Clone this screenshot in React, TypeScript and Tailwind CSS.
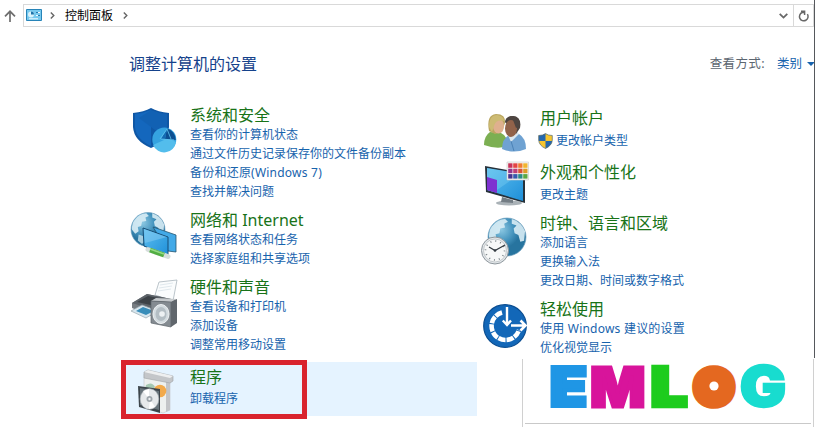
import React from 'react';

interface CategoryProps {
  title: string;
  links: string[];
  icon: React.ReactNode;
  className?: string;
  linksClassName?: string;
  shield?: boolean;
}

const SecurityIcon = () => (
  <svg className="w-[50px] h-[50px]" viewBox="0 0 50 50">
    <path d="M3 8Q14 7 21 3Q28 7 39 8V22Q38 36 21 43Q4 36 3 22Z" fill="#0f57a5" />
    <path d="M5 9Q14 8 21 5V41Q6 34 5 22Z" fill="#1467bd" />
    <path d="M21 5Q28 8 37 9V22Q36 28 33 31L9 13Z" fill="#1261b3" />
    <circle cx="34.3" cy="34.5" r="12" fill="#35a3e0" />
    <path d="M23 40A12 12 0 0 0 46 37Q40 33 34 35Z" fill="#53bdec" />
    <path d="M35 34L37 23.5A12 12 0 0 1 45.8 35Z" fill="#0c4f92" />
    <path d="M31 34L37 24L35 34Z" fill="#146bb3" />
    <path d="M30 34L37 24M37 24L41 34M31 34L44 35" stroke="#62c6ef" strokeWidth=".8" fill="none" />
  </svg>
);

const Globe = ({ cx, cy, r }: { cx: number; cy: number; r: number }) => (
  <g transform={`translate(${cx} ${cy}) scale(${r / 20})`}>
    <circle r="20" fill="url(#globeFill)" stroke="#6c9fbd" strokeWidth="0.7" />
    <path d="M-16-11Q-10-19-2-19L1-16L-3-14L-2-10L-7-9L-8-4L-12-3L-11 2L-15 5L-19 0Q-19-7-16-11Z" fill="#d9edf5" opacity=".9" />
    <path d="M5-19Q15-16 19-6L18 4L14 5L12-2L8-4L7-9L10-12L5-14Z" fill="#d9edf5" opacity=".9" />
    <path d="M-11 6L-5 8L-3 13L-7 17L-12 13Z" fill="#c4e2ee" opacity=".8" />
  </g>
);

const NetworkIcon = () => (
  <svg className="w-[50px] h-[50px]" viewBox="0 0 50 50">
    <Globe cx={18} cy={19.5} r={17} />
    <path d="M23 17L46 25V42L38 41Z" fill="#42a9e7" stroke="#24546f" strokeWidth=".8" />
    <path d="M13 18L38 27V46L14 36Z" fill="url(#screenFill)" stroke="#174d75" strokeWidth="1" />
    <path d="M14 19L37 27L15 33Z" fill="#8acef4" opacity=".5" />
    <path d="M18 39.5L38 46.5" stroke="#d6dedc" strokeWidth="5" strokeLinecap="round" />
    <path d="M20 40L34 45" stroke="#52ae42" strokeWidth="5" />
    <path d="M20 39L34 44" stroke="#94d986" strokeWidth="1.5" />
  </svg>
);

const HardwareIcon = () => (
  <svg className="w-[50px] h-[52px]" viewBox="0 0 50 52">
    <path d="M25 18L29 5L47 3L43 24Z" fill="#fafcfd" stroke="#a9b5bc" strokeWidth=".8" />
    <path d="M30 8L43 6M29 11L42 9M28 14L41 12" stroke="#e0e8ed" />
    <path d="M2 26L17 17L46 23V29L23 40L2 31Z" fill="#777d82" />
    <path d="M2 26L17 17L46 23L24 33Z" fill="#5d6369" />
    <path d="M7 25L18 19L39 23L25 29Z" fill="#3c4247" />
    <path d="M1 34L12 28L28 34L16 41Z" fill="#d8e7ef" stroke="#9aa7af" strokeWidth=".7" />
    <path d="M6 34L13 30L24 34L16 38Z" fill="#398db9" />
    <path d="M21 24L26 21L47 22L41 25Z" fill="#c5c9cc" />
    <path d="M21 24L41 25V50L21 46Z" fill="#848b91" stroke="#5d646a" strokeWidth=".7" />
    <path d="M41 25L47 22V46L41 50Z" fill="#60666c" />
    <ellipse cx="31" cy="37" rx="8" ry="9.5" fill="#d4dce0" stroke="#eef1f3" />
    <ellipse cx="31" cy="37" rx="5.5" ry="7" fill="#b4bec4" />
    <circle cx="32" cy="37" r="2.8" fill="#edf1f3" />
  </svg>
);

const ProgramsIcon = () => (
  <svg className="w-[50px] h-[50px]" viewBox="0 0 50 50">
    <path d="M14 7L40 13V43L33 46L14 40Z" fill="#edf0ef" stroke="#c5c8ca" strokeWidth=".6" />
    <path d="M36 14L40 13V43L36 45Z" fill="#c3c5c8" />
    <path d="M14 5L18 3L43 9V14L40 16L14 11Z" fill="#c4c6c9" stroke="#9fa2a6" strokeWidth=".6" />
    <path d="M14 5L18 3L43 9L40 11Z" fill="#eeeff0" />
    <path d="M16 18Q22 14 25 20L21 25L15 22Z" fill="#a5c8b2" />
    <circle cx="30" cy="24" r="6.3" fill="#f2aa4c" />
    <path d="M8 19L30 22V46L9 40Z" fill="#3d454b" />
    <path d="M10 21L29 24V43L10 38Z" fill="#68747b" />
    <ellipse cx="19.5" cy="32" rx="9.3" ry="10.3" fill="#e6e9eb" stroke="#a9b0b5" strokeWidth=".6" />
    <path d="M19 32L13 24L19 22ZM20 32L25 40L19 42Z" fill="#fff" />
    <circle cx="19.5" cy="32" r="3" fill="#9ea6ac" />
    <circle cx="19.5" cy="32" r="1.2" fill="#eff1f2" />
  </svg>
);

const UsersIcon = () => (
  <svg className="w-[50px] h-[46px]" viewBox="0 0 50 46">
    <path d="M4 37Q4 28 10 24L21 25Q28 28 27 38Q18 42 4 37Z" fill="#7caf52" />
    <path d="M9 23Q6 7 16 6Q26 6 25 15L22 24L15 26Z" fill="#baa65f" />
    <ellipse cx="18.5" cy="18" rx="5.5" ry="7.5" fill="#dfb08e" />
    <path d="M9 19Q9 7 17 7Q24 8 24 13Q16 11 14 18L12 24Z" fill="#cdbb74" />
    <path d="M22 41Q22 31 29 27L39 26Q46 30 46 41Q34 46 22 41Z" fill="#6fa2d2" />
    <path d="M28 27L31 34L39 26L37 23H29Z" fill="#dbe7ef" />
    <path d="M25 14Q26 8 33 8Q42 9 40 20L36 26Z" fill="#4e4541" />
    <ellipse cx="31" cy="20.5" rx="6" ry="8.5" fill="#91624a" />
    <path d="M25 15Q27 11 33 12L36 20L40 18Q40 8 33 8Q26 8 25 15Z" fill="#4e4541" />
    <path d="M31 33L34 43" stroke="#4b82b6" />
  </svg>
);

const AppearanceIcon = () => {
  const colors = [
    '#c83258', '#e34444', '#ef7b30', '#f1b52f',
    '#94368e', '#bd3f78', '#d95538', '#dd9b2a',
    '#46348f', '#365bae', '#2c8b87', '#5ca843'
  ];

  return (
    <svg className="w-[50px] h-[50px]" viewBox="0 0 50 50">
      <ellipse cx="29" cy="45" rx="13" ry="2.5" fill="#aab2b7" />
      <path d="M22 39L33 42V45L21 44Z" fill="#737d84" />
      <path d="M5 8L45 15V45L6 34Z" fill="#26313a" />
      <path d="M7 10L43 16V43L7 32Z" fill="url(#screenFill)" />
      <path d="M7 10L40 16L14 34L7 32Z" fill="#84d3f4" opacity=".35" />
      <path d="M7 19L17 22V35L7 32Z" fill="#7e31d0" />
      <path d="M27 4H48.5V22H27Z" fill="#f8f7f3" stroke="#c7c8c9" strokeWidth=".6" />
      {colors.map((color, i) => (
        <rect key={color} x={28.2 + (i % 4) * 5} y={5.3 + Math.floor(i / 4) * 5.4} width="4.3" height="4.5" fill={color} />
      ))}
    </svg>
  );
};

const ClockIcon = () => (
  <svg className="w-[50px] h-[53px]" viewBox="0 0 50 53">
    <Globe cx={27} cy={24} r={19} />
    <circle cx="15" cy="37.5" r="13.5" fill="#e4e8eb" stroke="#8d969c" />
    <circle cx="15" cy="37.5" r="11.5" fill="#f7f8f8" stroke="#b8bec2" strokeWidth=".8" />
    <circle cx="15" cy="37.5" r="9.5" fill="none" stroke="#7c858a" strokeWidth="1.7" strokeDasharray="1 3.974" />
    <path d="M9 34L15 37.5L25 32" fill="none" stroke="#333a40" strokeWidth="1.3" />
    <circle cx="15" cy="37.5" r="1.3" fill="#333a40" />
  </svg>
);

const EaseIcon = () => (
  <svg className="w-[50px] h-[50px]" viewBox="0 0 50 50">
    <circle cx="25" cy="27" r="21.3" fill="#1267b8" stroke="#0a4d91" strokeWidth="1.2" />
    <path d="M22 13.5A14 14 0 1 0 39 31" fill="none" stroke="#fff" strokeWidth="4.6" strokeDasharray="7.2 1" />
    <path d="M27 8V25M22.8 21.5L27 26L31 21.5" fill="none" stroke="#fff" strokeWidth="2.4" />
    <path d="M31 26.5H45M40.5 21.5L45.5 26.5L40.5 31.5" fill="none" stroke="#fff" strokeWidth="2.6" />
  </svg>
);

const UacShield = () => (
  <svg className="w-[15px] h-[16px] shrink-0" viewBox="0 0 15 16">
    <path d="M.7 2.5Q5 2.5 7.5.6Q10 2.5 14.3 2.5V7Q14 12.5 7.5 15.5Q1 12.5.7 7Z" fill="#f6c52e" />
    <path d="M.7 2.5Q5 2.5 7.5.6V8H.8ZM7.5 8H14.2Q13.5 13 7.5 15.5Z" fill="#2467ae" />
    <path d="M.7 2.5Q5 2.5 7.5.6Q10 2.5 14.3 2.5V7Q14 12.5 7.5 15.5Q1 12.5.7 7Z" fill="none" stroke="#536b78" strokeWidth=".7" />
  </svg>
);

const Category: React.FC<CategoryProps> = ({ title, links, icon, className = '', linksClassName = '', shield }) => (
  <section className={`flex gap-[10px] ${className}`}>
    <div className="w-[50px] h-0 shrink-0">{icon}</div>
    <div className="whitespace-nowrap">
      <h2 className="text-base leading-5 text-[#187318]">{title}</h2>
      <ul className={linksClassName}>
        {links.map(link => (
          <li
            key={link}
            className={`flex items-center h-[19px] text-xs leading-[19px] text-[#1763ad] ${link.includes('Windows') ? 'tracking-[0.22px]' : ''}`}
          >
            {shield && <span className="-ml-[2px] mr-[3px]"><UacShield /></span>}
            <a href="#">{link}</a>
          </li>
        ))}
      </ul>
    </div>
  </section>
);

const AddressBar = () => (
  <header className="flex h-[27px] pt-1">
    <div className="w-[23px] h-[23px] flex items-center pl-1">
      <svg className="w-3 h-3" viewBox="0 0 12 12" fill="none" stroke="#6e6e6e" strokeWidth="1.7">
        <path d="M6 12V1.5M1 6.3L6 1.3L11 6.3" />
      </svg>
    </div>
    <div className="flex items-center w-[791px] h-[23px] border border-[#d9d9d9] text-xs text-black">
      <svg className="ml-[2px] -mt-[2px] w-4 h-3 shrink-0" viewBox="0 0 16 12">
        <path d="M.5.5H15.5V11.5H.5Z" fill="#77c9ee" stroke="#2784b8" />
        <circle cx="5" cy="5.5" r="3" fill="#d9f2fb" />
        <path d="M5 5.5V2.5A3 3 0 0 1 8 5.5Z" fill="#1e73aa" />
        <path d="M10 3.5H14M10 6.5H14M3 9.8H12" stroke="#f1fbff" />
        <path d="M10 3.5H12M12 6.5H14" stroke="#2477ad" />
      </svg>
      <svg className="ml-2 w-[5px] h-[7px]" viewBox="0 0 5 7" fill="none" stroke="#666" strokeWidth="1.4"><path d="M.8.5L3.8 3.5L.8 6.5" /></svg>
      <span className="ml-[10px] w-12 whitespace-nowrap leading-5">控制面板</span>
      <svg className="ml-[10px] w-[5px] h-[7px]" viewBox="0 0 5 7" fill="none" stroke="#666" strokeWidth="1.4"><path d="M.8.5L3.8 3.5L.8 6.5" /></svg>
      <div className="ml-auto mr-[5px]">
        <svg className="w-[9px] h-[6px]" viewBox="0 0 9 6" fill="none" stroke="#686868" strokeWidth="1.8"><path d="M.7.8L4.5 4.6L8.3.8" /></svg>
      </div>
      <div className="flex items-center justify-center w-5 h-full border-l border-[#d9d9d9]">
        <svg className="w-3 h-3" viewBox="0 0 12 12" fill="none" stroke="#686868" strokeWidth="1.5">
          <path d="M9.4 4.2A4.3 4.3 0 1 1 4.2 2.5L6 2.5M3 1.2H6.6V5" />
        </svg>
      </div>
    </div>
  </header>
);

const logoLetters = [
  { char: 'E', x: 27, y: 47, size: 53.5, width: 37, stroke: 4, color: '#1f96e5' },
  { char: 'M', x: 67, y: 47.5, size: 55, width: 55.5, stroke: 3, color: '#d8149b' },
  { char: 'L', x: 128, y: 47, size: 53.5, width: 36, stroke: 4.5, color: '#1dcc1d' },
  { char: 'O', x: 173.5, y: 43.5, size: 44, width: 35, stroke: 11.5, color: '#e46820' },
  { char: 'G', x: 217, y: 47.3, size: 55, width: 46, stroke: 2.5, color: '#18dccf' }
];

const Logo = () => (
  <div className="absolute left-[522px] top-[359px] w-[292px] h-[68px] bg-white border-x border-[#d0d0d0]">
    <svg className="w-[290px] h-[64px] overflow-visible" viewBox="0 0 290 64">
      {logoLetters.map(letter => (
        <text
          key={letter.char}
          x={letter.x}
          y={letter.y}
          fontSize={letter.size}
          textLength={letter.width}
          lengthAdjust="spacingAndGlyphs"
          fill={letter.color}
          stroke={letter.color}
          strokeWidth={letter.stroke}
          className="font-[Inter,sans-serif] font-black"
        >
          {letter.char}
        </text>
      ))}
      <circle cx="191" cy="27" r="4.6" fill="#fff" />
    </svg>
    <div className="mx-[2px] border-t border-[#c9c9c9]" />
  </div>
);

const App: React.FC = () => {
  return (
    <div className="relative w-[815px] h-[427px] overflow-hidden bg-white font-['Noto_Sans','Noto_Sans_CJK_SC',sans-serif]">
      <svg className="absolute w-0 h-0">
        <defs>
          <radialGradient id="globeFill" cx="35%" cy="30%">
            <stop offset="0" stopColor="#8cc8e2" />
            <stop offset=".65" stopColor="#4493bd" />
            <stop offset="1" stopColor="#27749f" />
          </radialGradient>
          <linearGradient id="screenFill" x2="1" y2="1">
            <stop offset="0" stopColor="#5fc0ef" />
            <stop offset="1" stopColor="#1e8fd9" />
          </linearGradient>
        </defs>
      </svg>

      <AddressBar />

      <div className="flex items-center h-[38px] mt-[18px] pl-[129px]">
        <h1 className="text-base leading-6 text-[#15428b]">调整计算机的设置</h1>
        <div className="flex items-center ml-auto text-[12.5px]">
          <span className="tracking-[0.4px] text-[#5c6670]">查看方式:</span>
          <span className="ml-3 text-[#1763ad]">类别</span>
          <span className="ml-[5px] border-x-4 border-t-4 border-x-transparent border-t-[#1763ad]" />
        </div>
      </div>

      <main className="flex mt-[22px]">
        <div className="w-[477px] shrink-0">
          <Category className="pl-[130px]" title="系统和安全" icon={<SecurityIcon />} links={['查看你的计算机状态', '通过文件历史记录保存你的文件备份副本', '备份和还原(Windows 7)', '查找并解决问题']} />
          <Category className="pl-[130px] mt-[9px]" title="网络和 Internet" icon={<NetworkIcon />} links={['查看网络状态和任务', '选择家庭组和共享选项']} />
          <Category className="pl-[130px] mt-[9px]" title="硬件和声音" icon={<HardwareIcon />} links={['查看设备和打印机', '添加设备', '调整常用移动设置']} />
          <Category className="ml-[121px] pl-[9px] mt-2 pt-[5px] h-[54px] bg-[#e5f3ff]" linksClassName="mt-[2px]" title="程序" icon={<ProgramsIcon />} links={['卸载程序']} />
        </div>
        <div className="pl-[3px] pt-[3px]">
          <Category title="用户帐户" icon={<UsersIcon />} linksClassName="mt-[3px]" links={['更改帐户类型']} shield />
          <Category className="mt-3" title="外观和个性化" icon={<div className="-mt-1"><AppearanceIcon /></div>} linksClassName="mt-[3px]" links={['更改主题']} />
          <Category className="mt-[9px]" title="时钟、语言和区域" icon={<ClockIcon />} links={['添加语言', '更换输入法', '更改日期、时间或数字格式']} />
          <Category className="mt-[9px]" title="轻松使用" icon={<EaseIcon />} links={['使用 Windows 建议的设置', '优化视觉显示']} />
        </div>
      </main>

      <div className="absolute left-[121px] top-[360px] w-[186px] h-[59px] border-[5px] border-[#d9232e]" />
      <div className="absolute right-0 top-0 w-px h-[358px] bg-[#55585c]" />
      <Logo />
    </div>
  );
};

export default App;
